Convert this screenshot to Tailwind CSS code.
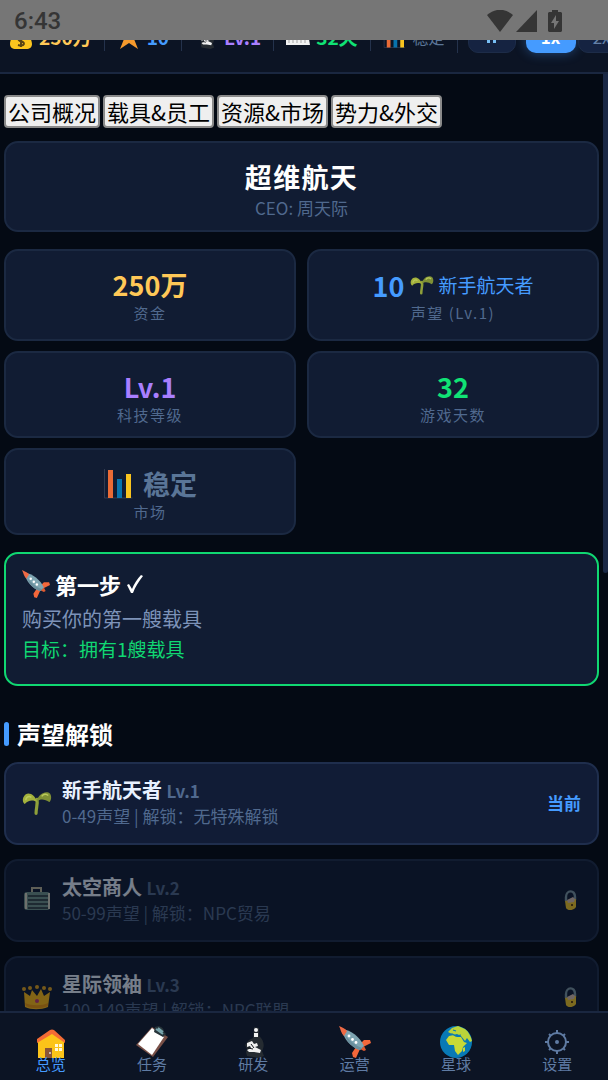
<!DOCTYPE html>
<html lang="zh-CN">
  <head>
    <meta charset="UTF-8" />
    <meta name="viewport" content="width=device-width, initial-scale=1.0" />
    <title>超维航天</title>
    <script src="https://cdn.jsdelivr.net/npm/@tailwindcss/browser@4"></script>
  </head>
  <body class="bg-[#040a14] font-['Noto_Sans_CJK_SC','Noto_Sans',sans-serif] text-white">
    <!-- Icon sprites -->
    <svg class="hidden" aria-hidden="true">
      <symbol id="seedling" viewBox="0 0 32 32">
        <path d="M16 12c1 5-1 9-1 15" fill="none" stroke="#8fa03a" stroke-width="3.4" stroke-linecap="round" />
        <path d="M16 15C14 6 5 3 2 9c-2 3-1 7 1 8 3-4 9-5 13-2z" fill="#a3b13c" />
        <path d="M16 14C17 6 26 2 30 6c2 3 1 8-1 9-4-3-9-4-13-1z" fill="#7f9035" />
        <path d="M4 13c0-3 3-5 6-3M21 9c2-3 5-3 7-1" fill="none" stroke="#bccb5c" stroke-width="1.6" />
      </symbol>
      <symbol id="rocket" viewBox="0 0 32 32">
        <path d="M20 19l5-5 6 0 1 3-8 4zM17 21l-4 6 1 4 3 1 4-9z" fill="#f4673a" />
        <path d="M21 23l4-3 2 4-2 1z" fill="#e05a30" />
        <path d="M3 3c9 1 18 8 22 17l-4 4C12 21 4 13 3 3z" fill="#7ea5b2" />
        <path d="M8 14c3 5 8 9 13 10l2-2C17 20 11 15 6 9z" fill="#6a8f9d" />
        <path d="M0 0c4 2 7 3 8 5l-3 5C2 7 2 4 0 0z" fill="#ef6a45" />
        <circle cx="10" cy="10" r="1.4" fill="#fff" />
        <circle cx="13.5" cy="13.5" r="1.4" fill="#fff" />
        <circle cx="17" cy="16.5" r="1.4" fill="#fff" />
      </symbol>
      <symbol id="chart" viewBox="0 0 32 32">
        <path d="M1.5 1v29h28" fill="none" stroke="#303a50" stroke-width="1" />
        <path d="M5 2h5v28H5z" fill="#ea6b36" />
        <path d="M14 11h5v19h-5z" fill="#0873ad" />
        <path d="M23 6h5v24h-5z" fill="#f9c41f" />
      </symbol>
      <symbol id="microscope" viewBox="0 0 32 32">
        <path d="M17 1l5 1 0 8c5 4 6 10 3 15l2 5-5 2-12-2-1-4 1-3-2-4 4-5 4-2z" fill="#252b31" />
        <circle cx="19" cy="4" r="2" fill="#f4f4f4" />
        <path d="M17 7h4v4h-4z" fill="#f4f4f4" />
        <path d="M10 17l5-2 2 3 3-1 1 3-3 1 6 3-1 3-6-1-5 0-2-2 4-2-1-2-3 1z" fill="#f0f0f0" />
        <path d="M11 22l5 1M14 18l3 4" fill="none" stroke="#15191d" stroke-width="1" />
      </symbol>
      <symbol id="lock" viewBox="0 0 16 20">
        <path d="M3 11V7c0-7 9-8 9 0v3" fill="none" stroke="#7d97a6" stroke-width="2.4" />
        <path d="M2 11l11-2v8c-3 4-8 4-10 1z" fill="#f4c92b" />
        <path d="M4 10l6-3 2 2-1 3-6 1z" fill="#d9c1b4" />
        <path d="M9 14v2" stroke="#6b4a10" stroke-width="2" />
      </symbol>
    </svg>

    <div class="relative flex h-screen flex-col overflow-hidden">
      <!-- System status bar -->
      <div class="absolute inset-x-0 top-0 z-50 flex h-10 items-center justify-between bg-[#767676] pt-px pr-[46px] pl-[14px] text-[#353535]">
        <span class="font-[Roboto,sans-serif] text-2xl font-medium">6:43</span>
        <div class="flex items-center gap-[3px]">
          <svg class="h-[22px] w-[26px]" viewBox="0 0 26 22" fill="currentColor"><path d="M0 5C8-2 18-2 26 5L13 22z" /></svg>
          <svg class="h-[22px] w-[21px]" viewBox="0 0 21 22" fill="currentColor"><path d="M21 0v22H0z" /></svg>
          <svg class="ml-2 h-[22px] w-[14px]" viewBox="0 0 14 22"><path d="M4 0h6v2h3l1 1v18l-1 1H1l-1-1V3l1-1h3z" fill="currentColor" /><path d="M8 5l-5 8h3v6l5-8H8z" fill="#767676" /></svg>
        </div>
      </div>

      <!-- Header -->
      <header class="flex h-[74px] shrink-0 items-center overflow-hidden border-b-2 border-[#1a2740] bg-[#0c1424] pt-[2px] text-[19px] leading-7 font-bold whitespace-nowrap">
        <div class="flex shrink-0 items-center gap-[6px] pr-3 pl-[9px] text-[#ffc857]">
          <svg class="size-6" viewBox="0 0 24 24"><path d="M8 1h8l-2 5c5 3 9 8 9 13 0 3-2 5-6 5H7c-4 0-6-2-6-5C1 14 5 9 10 6z" fill="#fbc51e" /><path d="M15 12c-5-2-8 2-4 4 6 1 5 6-2 4M12 10v12" fill="none" stroke="#594414" stroke-width="2" /></svg>
          <span>250万</span>
        </div>
        <div class="flex shrink-0 items-center gap-[6px] border-l border-[#24324c] px-3 text-[#459bff]">
          <svg class="size-6" viewBox="0 0 24 24"><path d="M12 1l3 8h8l-6 5 4 10-9-6-9 6 4-10-6-5h8z" fill="#f79a2c" /></svg>
          <span>10</span>
        </div>
        <div class="flex shrink-0 items-center gap-[6px] border-l border-[#24324c] px-3 text-[#a97fff]">
          <svg class="size-6"><use href="#microscope" /></svg>
          <span>Lv.1</span>
        </div>
        <div class="flex shrink-0 items-center gap-[6px] border-l border-[#24324c] px-3 text-[#10e375]">
          <svg class="size-6" viewBox="0 0 24 24"><path d="M0 2h21l3 18H0z" fill="#f2f2f2" /><path d="M3 15v3M7 15v3M11 15v3M15 15v3M19 15v3" stroke="#a5a5a5" stroke-width="1" /></svg>
          <span>32天</span>
        </div>
        <div class="flex shrink-0 items-center gap-[6px] border-l border-[#24324c] px-3 text-[#5a7597]">
          <svg class="size-6"><use href="#chart" /></svg>
          <span class="text-base leading-7 font-normal">稳定</span>
        </div>
        <div class="flex shrink-0 items-center border-l border-[#24324c] pl-[10px] text-[17px]">
          <button class="mr-[10px] flex h-8 w-12 items-center justify-center rounded-[10px] border border-[#1d2c48] bg-[#152341]" aria-label="暂停">
            <svg class="h-3 w-[11px]" viewBox="0 0 11 12"><path d="M1 0h3v12H1zM7 0h3v12H7z" fill="#78bff5" /></svg>
          </button>
          <button class="h-8 w-[50px] rounded-[10px] bg-[#459bff] shadow-[0_0_12px] shadow-[#459bff]/40">1x</button>
          <button class="ml-[2px] h-8 w-12 rounded-[10px] border border-[#1d2c48] bg-[#152341] font-normal text-[#6481a8]">2x</button>
        </div>
      </header>

      <!-- Main -->
      <main class="relative min-h-0 flex-1 overflow-hidden pt-[21px] pr-[9px] pl-1">
        <div class="absolute top-0 right-0 h-[499px] w-[5px] rounded-b bg-[#1a2845]"></div>

        <div class="flex gap-[3px] text-[22px] leading-[29px] text-black">
          <button class="rounded-[4px] border-2 border-[#8a8a8a] bg-[#efefef] px-[2px]">公司概况</button>
          <button class="rounded-[4px] border-2 border-[#8a8a8a] bg-[#efefef] px-[2px]">载具&amp;员工</button>
          <button class="rounded-[4px] border-2 border-[#8a8a8a] bg-[#efefef] px-[2px]">资源&amp;市场</button>
          <button class="rounded-[4px] border-2 border-[#8a8a8a] bg-[#efefef] px-[2px]">势力&amp;外交</button>
        </div>

        <!-- Company -->
        <section class="mt-[13px] rounded-[14px] border-2 border-[#1b2942] bg-[#111c33] pt-[14px] pb-[11px] text-center">
          <h1 class="text-[27px] leading-10 font-bold tracking-wider">超维航天</h1>
          <p class="text-[17px] leading-[22px] text-[#50698e]">CEO: 周天际</p>
        </section>

        <!-- Stats -->
        <section class="mt-[17px] grid grid-cols-2 gap-x-[11px] gap-y-[10px] text-center">
          <div class="min-h-[92px] rounded-[14px] border-2 border-[#1b2942] bg-[#111c33] py-[14px]">
            <div class="text-[27px] leading-10 font-bold text-[#ffc857]">250万</div>
            <div class="text-[15px] leading-[15px] tracking-widest text-[#50698e]">资金</div>
          </div>
          <div class="min-h-[92px] rounded-[14px] border-2 border-[#1b2942] bg-[#111c33] py-[14px]">
            <div class="flex h-10 items-baseline justify-center gap-[6px] text-[27px] leading-[38px] font-bold text-[#459bff]">
              10
              <span class="flex items-center gap-1 text-[19px] leading-10 font-normal"><svg class="size-6"><use href="#seedling" /></svg>新手航天者</span>
            </div>
            <div class="text-[15px] leading-[15px] tracking-widest text-[#50698e]">声望 (Lv.1)</div>
          </div>
          <div class="rounded-[14px] border-2 border-[#1b2942] bg-[#111c33] py-[14px]">
            <div class="text-[27px] leading-10 font-bold text-[#a97fff]">Lv.1</div>
            <div class="text-[15px] leading-[15px] tracking-widest text-[#50698e]">科技等级</div>
          </div>
          <div class="rounded-[14px] border-2 border-[#1b2942] bg-[#111c33] py-[14px]">
            <div class="text-[27px] leading-10 font-bold text-[#10e375]">32</div>
            <div class="text-[15px] leading-[15px] tracking-widest text-[#50698e]">游戏天数</div>
          </div>
          <div class="rounded-[14px] border-2 border-[#1b2942] bg-[#111c33] py-[14px]">
            <div class="flex items-center justify-center gap-2 text-[27px] leading-10 font-bold text-[#5a7597]">
              <svg class="size-8"><use href="#chart" /></svg>稳定
            </div>
            <div class="text-[15px] leading-[15px] tracking-widest text-[#50698e]">市场</div>
          </div>
        </section>

        <!-- Guide -->
        <section class="mt-[17px] rounded-[14px] border-2 border-[#10d872] bg-[#111c33] px-4 pt-3 pb-[21px]">
          <h2 class="flex items-center gap-[5px] text-[22px] leading-9 font-bold">
            <svg class="size-7"><use href="#rocket" /></svg>
            <span>第一步</span>
            <svg class="h-5 w-[17px]" viewBox="0 0 17 20"><path d="M1 11l2-1 3 5C8 10 11 5 15 1l2 1C13 7 9 13 7 19H5z" fill="#fff" /></svg>
          </h2>
          <p class="mt-px text-xl leading-8 text-[#7d93b9]">购买你的第一艘载具</p>
          <p class="text-[19px] leading-7 text-[#10d872]">目标：拥有1艘载具</p>
        </section>

        <!-- Unlocks -->
        <div class="mt-8 flex items-center gap-2">
          <div class="h-6 w-[5px] rounded-full bg-[#459bff]"></div>
          <h2 class="text-2xl leading-8 font-bold">声望解锁</h2>
        </div>
        <ul class="mt-3 space-y-[14px]">
          <li class="flex h-[83px] items-center gap-[10px] rounded-[14px] border-2 border-[#1f2e4d] bg-[#111c36] px-4 pb-[2px]">
            <svg class="size-[30px]"><use href="#seedling" /></svg>
            <div class="flex-1">
              <div class="text-xl leading-[25px] font-bold text-[#e8f1ff]">新手航天者 <span class="text-[17px] text-[#50698e]">Lv.1</span></div>
              <div class="text-[17px] leading-[25px] text-[#50698e]">0-49声望 | 解锁：无特殊解锁</div>
            </div>
            <span class="text-[17px] font-bold text-[#459bff]">当前</span>
          </li>
          <li class="flex h-[83px] items-center gap-[10px] rounded-[14px] border-2 border-[#1f2e4d] bg-[#111c36] px-4 pb-[2px] opacity-50">
            <svg class="size-[30px]" viewBox="0 0 30 30"><path d="M10 7V3h9v4" fill="none" stroke="#b9b49a" stroke-width="2" /><rect x="2" y="7" width="26" height="18" rx="3" fill="#71948f" /><path d="M6 11h21M6 15h21M6 19h21M6 23h21" stroke="#384b50" stroke-width="2" /><path d="M4 8v16M27 8v16" stroke="#d8d6c5" stroke-width="2" /></svg>
            <div class="flex-1">
              <div class="text-xl leading-[25px] font-bold text-[#e8f1ff]">太空商人 <span class="text-[17px] text-[#50698e]">Lv.2</span></div>
              <div class="text-[17px] leading-[25px] text-[#50698e]">50-99声望 | 解锁：NPC贸易</div>
            </div>
            <svg class="mr-[2px] h-5 w-4"><use href="#lock" /></svg>
          </li>
          <li class="flex h-[83px] items-center gap-[10px] rounded-[14px] border-2 border-[#1f2e4d] bg-[#111c36] px-4 pb-[2px] opacity-50">
            <svg class="size-[30px]" viewBox="0 0 30 30"><path d="M2 10l6 4 2-6 5 6 4-7 3 7 6-4-2 15c-7 3-17 3-23 0z" fill="#ffbd18" /><path d="M3 21c7 3 17 3 23 0v3c-7 3-16 3-22 0z" fill="#f09a12" /><g fill="#e5a51f"><circle cx="2" cy="7" r="2" /><circle cx="8" cy="6" r="2" /><circle cx="15" cy="5" r="2" /><circle cx="22" cy="6" r="2" /><circle cx="28" cy="7" r="2" /></g><circle cx="15" cy="19" r="2" fill="#c23d77" /></svg>
            <div class="flex-1">
              <div class="text-xl leading-[25px] font-bold text-[#e8f1ff]">星际领袖 <span class="text-[17px] text-[#50698e]">Lv.3</span></div>
              <div class="text-[17px] leading-[25px] text-[#50698e]">100-149声望 | 解锁：NPC联盟</div>
            </div>
            <svg class="mr-[2px] h-5 w-4"><use href="#lock" /></svg>
          </li>
        </ul>
      </main>

      <!-- Bottom nav -->
      <nav class="grid h-[69px] shrink-0 grid-cols-6 border-t-2 border-[#1a2740] bg-[#0c1424] pt-[13px] text-[15px] leading-4 text-[#5f7ba3]">
        <a href="#" class="flex flex-col items-center text-[#459bff]">
          <svg class="size-8" viewBox="0 0 32 32"><path d="M3 15L17 5l12 10v17H3z" fill="#fcc419" /><path d="M2 17v-4L15 4q2-1 4 0l11 10v3L17 8z" fill="#f36b35" /><path d="M10 22h7v10h-7z" fill="#8a5638" /><circle cx="15" cy="27" r="1" fill="#ddd" /><path d="M20 18h3v3h-3zM24 18h3v3h-3zM20 22h3v3h-3zM24 22h3v3h-3z" fill="#fff8db" /></svg>
          <span class="-mt-[2px]">总览</span>
        </a>
        <a href="#" class="flex flex-col items-center">
          <svg class="size-8" viewBox="0 0 32 32"><path d="M16 1l16 10-15 20L0 19z" fill="#795047" /><path d="M16 2l12 9-12 18L2 18z" fill="#fff" /><path d="M19 1c5-2 9 1 9 5l2 2-3 3-9-5z" fill="#27343a" /><path d="M20 3l7 5M22 2l5 4" stroke="#78a4ac" stroke-width="2" /></svg>
          <span class="-mt-[2px]">任务</span>
        </a>
        <a href="#" class="flex flex-col items-center">
          <svg class="size-8"><use href="#microscope" /></svg>
          <span class="-mt-[2px]">研发</span>
        </a>
        <a href="#" class="flex flex-col items-center">
          <svg class="size-8"><use href="#rocket" /></svg>
          <span class="-mt-[2px]">运营</span>
        </a>
        <a href="#" class="flex flex-col items-center">
          <svg class="size-8" viewBox="0 0 32 32"><circle cx="16" cy="16" r="16" fill="#0879b5" /><path d="M6 14l3-4 5-1 3 2 4 0 3 5 3 1-4 4-1 4-4 4-3-4-1-6-5 0z" fill="#c8d936" /><path d="M8 6l4-4 6-2 7 3c4 3 6 8 7 12l-2 1-3-4-2 3-4-5-4-2-4 1-3-2z" fill="#bbd43a" /><path d="M8 9l4-1 4 2 5-1M13 4l3 1" fill="none" stroke="#0879b5" stroke-width="1.2" /><path d="M23 22l2-1 0 4-2 1z" fill="#c8d936" /></svg>
          <span class="-mt-[2px]">星球</span>
        </a>
        <a href="#" class="flex flex-col items-center">
          <svg class="size-8" viewBox="0 0 32 32" fill="none" stroke="currentColor" stroke-width="2"><circle cx="16" cy="16" r="9" /><circle cx="16" cy="16" r="1" fill="currentColor" /><path d="M16 7V4M16 28v-3M7 16H4M28 16h-3M9.6 9.6L8 8M24 24l-1.6-1.6M9.6 22.4L8 24M24 8l-1.6 1.6" /></svg>
          <span class="-mt-[2px]">设置</span>
        </a>
      </nav>
    </div>
  </body>
</html>
